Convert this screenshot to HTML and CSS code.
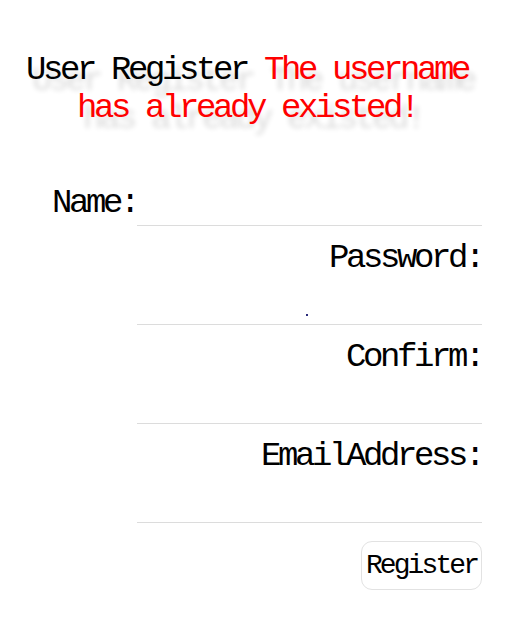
FILE: index.html
```html
<!DOCTYPE html>
<html>
<head>
<meta charset="utf-8">
<link rel="stylesheet" href="styles.css">
</head>
<body>
<div class="page">
  <h1 class="title">User Register <span class="error">The username has already existed!</span></h1>
  <form class="form">
    <div class="field">
      <label class="label label-inline">Name:</label>
      <input class="input" type="text">
    </div>
    <div class="field">
      <label class="label">Password:</label>
      <span class="input-wrap dotted"><input class="input" type="password"></span>
    </div>
    <div class="field">
      <label class="label">Confirm:</label>
      <input class="input" type="password">
    </div>
    <div class="field">
      <label class="label">EmailAddress:</label>
      <input class="input" type="text">
    </div>
    <div class="actions">
      <button class="btn" type="button">Register</button>
    </div>
  </form>
</div>
</body>
</html>
```
FILE: styles.css
```css
html, body {
  margin: 0;
  padding: 0;
  background: #fff;
}
body {
  padding: 8px;
  font-family: "Liberation Mono", "Noto Sans CJK SC", monospace;
  color: #000;
}
.page {
  width: 478px;
}
.title {
  margin: 43px 0 0 0;
  font-weight: normal;
  font-size: 34px;
  letter-spacing: -3.4px;
  line-height: 38px;
  text-align: center;
  text-shadow: 6px 11px 5px rgba(0, 0, 0, 0.14);
}
.error {
  color: #ff0000;
}
.form {
  margin: 52px 4px 0 0;
}
.field {
  display: flex;
  flex-wrap: wrap;
  justify-content: flex-end;
  align-items: flex-end;
  margin-top: 12px;
}
.field:first-child {
  margin-top: 0;
}
.label {
  font-size: 34px;
  letter-spacing: -3.4px;
  line-height: 40px;
  height: 40px;
  padding-right: 3.4px;
  margin-right: -3.4px;
}
.label-inline {
  margin-bottom: 3px;
}
.input-wrap {
  position: relative;
  display: block;
}
.dotted::after {
  content: "";
  position: absolute;
  left: 169px;
  bottom: 9px;
  width: 2px;
  height: 2px;
  background: #2a2a7a;
}
.input {
  display: block;
  box-sizing: border-box;
  width: 345px;
  height: 47px;
  margin: 0;
  padding: 0;
  border: none;
  border-bottom: 1px solid #dcdcdc;
  outline: none;
  background: transparent;
  font-family: inherit;
  font-size: 20px;
}
.actions {
  display: flex;
  justify-content: flex-end;
  margin-top: 18px;
}
.btn {
  box-sizing: border-box;
  width: 121px;
  height: 49px;
  padding: 0;
  background: #fff;
  border: 1px solid #e2e2e2;
  border-radius: 11px;
  font-family: "Liberation Mono", monospace;
  font-size: 28px;
  letter-spacing: -2.9px;
  color: #000;
}
```
